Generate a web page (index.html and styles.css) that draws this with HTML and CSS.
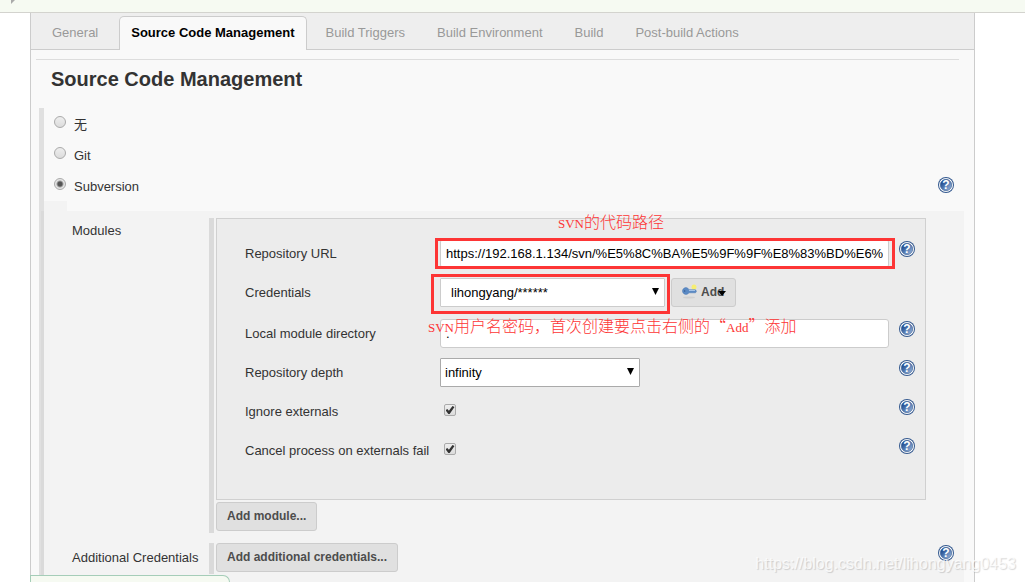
FILE: index.html
```html
<!DOCTYPE html>
<html lang="en">
<head>
<meta charset="utf-8">
<title>Source Code Management</title>
<link rel="stylesheet" href="styles.css">
</head>
<body>
<svg class="defs" aria-hidden="true">
  <defs>
    <linearGradient id="blue" x1="0" y1="0" x2="1" y2="1">
      <stop offset="0.2" stop-color="#1f4d92"/>
      <stop offset="1" stop-color="#a5c0e2"/>
    </linearGradient>
    <symbol id="help" viewBox="0 0 16 16">
      <circle cx="8" cy="8" r="8" fill="#34598f"/>
      <circle cx="8" cy="8" r="7" fill="#fff"/>
      <circle cx="8" cy="8" r="5.700" fill="url(#blue)" stroke="#34598f" stroke-width=".6"/>
      <text x="8" y="12" text-anchor="middle" font-family="Liberation Sans, sans-serif" font-weight="bold" font-size="12" fill="#fff">?</text>
    </symbol>
  </defs>
</svg>

<div class="topbar"><span class="corner"></span></div>

<main class="panel">
  <nav class="tabs">
    <a class="tab" href="#general">General</a>
    <a class="tab active" href="#scm">Source Code Management</a>
    <a class="tab" href="#triggers">Build Triggers</a>
    <a class="tab" href="#environment">Build Environment</a>
    <a class="tab" href="#build">Build</a>
    <a class="tab" href="#post">Post-build Actions</a>
  </nav>

  <h1 class="title" id="scm">Source Code Management</h1>

  <form class="scm">
    <div class="choice"><input class="radio" type="radio" name="scm" id="none"><label for="none" lang="zh-CN">无</label></div>
    <div class="choice"><input class="radio" type="radio" name="scm" id="git"><label for="git">Git</label></div>
    <div class="choice"><input class="radio" type="radio" name="scm" id="svn" checked><label for="svn">Subversion</label>
      <a class="help" href="#help" aria-label="Help for Subversion"><svg><use href="#help"/></svg></a></div>

    <div class="nub"></div>
    <div class="sub">
      <div class="setting">
        <div class="setting-name">Modules</div>
        <div class="setting-body">
          <div class="module">
            <div class="row">
              <label for="url">Repository URL</label>
              <div class="control">
                <input class="text" id="url" type="text" value="https://192.168.1.134/svn/%E5%8C%BA%E5%9F%9F%E8%83%BD%E6%">
                <span class="mark mark-url"></span>
                <span class="note note-url" lang="zh-CN"><span class="latin">SVN</span>的代码路径</span>
              </div>
              <a class="help" href="#help" aria-label="Help for Repository URL"><svg><use href="#help"/></svg></a>
            </div>
            <div class="row row-credentials">
              <label for="cred">Credentials</label>
              <div class="control">
                <span class="picker picker-cred">
                  <select class="select" id="cred"><option>lihongyang/******</option></select>
                  <svg class="caret" viewBox="0 0 7 7"><path d="M0 0h7L3.500 7z"/></svg>
                  <span class="mark mark-cred"></span>
                </span>
                <button class="button add" type="button">
                  <svg class="key" viewBox="0 0 15 15">
                    <ellipse cx="7" cy="13.500" rx="6" ry="1" fill="#d0d0d0"/>
                    <circle cx="12" cy="3" r="2.500" fill="#f6ee72"/>
                    <path d="M4 3.500a3.500 3.500 0 1 0 3 5.300h6.500l1-1.500-1-1.500H7A3.500 3.500 0 0 0 4 3.500z" fill="#5b8ac4" stroke="#4a78b4" stroke-width=".5"/>
                    <path d="M7 6.500h6" stroke="#a6c3e6"/>
                    <circle cx="2.700" cy="7" r=".7" fill="#31568a"/>
                  </svg>
                  Add
                  <svg class="add-caret" viewBox="0 0 8 6"><path d="M0 1h8L4 6z"/></svg>
                </button>
                <span class="note note-cred" lang="zh-CN"><span class="latin">SVN</span>用户名密码，首次创建要点击右侧的“<span class="latin">Add</span>”添加</span>
              </div>
            </div>
            <div class="row">
              <label for="dir">Local module directory</label>
              <div class="control"><input class="text" id="dir" type="text" value="."></div>
              <a class="help" href="#help" aria-label="Help for Local module directory"><svg><use href="#help"/></svg></a>
            </div>
            <div class="row">
              <label for="depth">Repository depth</label>
              <div class="control">
                <span class="picker picker-depth">
                  <select class="select" id="depth"><option>infinity</option></select>
                  <svg class="caret" viewBox="0 0 7 7"><path d="M0 0h7L3.500 7z"/></svg>
                </span>
              </div>
              <a class="help" href="#help" aria-label="Help for Repository depth"><svg><use href="#help"/></svg></a>
            </div>
            <div class="row">
              <label for="ignore">Ignore externals</label>
              <div class="control"><input class="check" id="ignore" type="checkbox" checked></div>
              <a class="help" href="#help" aria-label="Help for Ignore externals"><svg><use href="#help"/></svg></a>
            </div>
            <div class="row">
              <label for="cancel">Cancel process on externals fail</label>
              <div class="control"><input class="check" id="cancel" type="checkbox" checked></div>
              <a class="help" href="#help" aria-label="Help for Cancel process on externals fail"><svg><use href="#help"/></svg></a>
            </div>
          </div>
          <button class="button" type="button">Add module...</button>
        </div>
      </div>
      <div class="setting">
        <div class="setting-name setting-name-inline">Additional Credentials</div>
        <div class="setting-body"><button class="button" type="button">Add additional credentials...</button></div>
        <a class="help" href="#help" aria-label="Help for Additional Credentials"><svg><use href="#help"/></svg></a>
      </div>
    </div>
  </form>
</main>

<div class="bubble"></div>
<div class="watermark">https://blog.csdn.net/lihongyang0453</div>
</body>
</html>
```

FILE: styles.css
```css
* { box-sizing: border-box; }

body {
  margin: 0;
  min-height: 100vh;
  position: relative;
  display: flex;
  flex-direction: column;
  background: #fff;
  color: #333;
  font: 13px/16px "Liberation Sans", "Noto Sans CJK SC", sans-serif;
}

.defs { position: absolute; width: 0; height: 0; }

.topbar {
  flex: none;
  height: 13px;
  padding-left: 11px;
  background: #f6faf2;
  border-bottom: 1px solid #d3d3ce;
}
.corner {
  display: block;
  width: 0;
  border-top: 4px solid #aaa;
  border-right: 4px solid transparent;
}

.panel {
  flex: 1;
  display: flex;
  flex-direction: column;
  margin: 0 50px 0 30px;
  background: #f9f9f9;
  border: solid #ccc;
  border-width: 0 1px;
}

.tabs {
  display: flex;
  align-items: flex-end;
  height: 37px;
  padding-left: 5px;
  background: #eee;
  border-bottom: 1px solid #ccc;
}
.tab {
  height: 33px;
  padding: 9px 16px 0;
  color: #999;
  text-decoration: none;
  white-space: nowrap;
}
.tab.active {
  height: 34px;
  margin: 0 3px -1px 5px;
  padding: 8px 11px 0;
  color: #000;
  font-weight: bold;
  background: #f9f9f9;
  border: 1px solid #ccc;
  border-bottom: 0;
  border-radius: 5px 5px 0 0;
}

.title {
  margin: 9px 15px 17px 5px;
  padding: 7px 15px 0;
  border-top: 1px solid #ddd;
  font-size: 20px;
  line-height: 24px;
}

.scm {
  flex: 1;
  display: flex;
  flex-direction: column;
  margin: 0 10px 0 8px;
  border-left: 5px solid #e0e0e0;
}

.choice {
  display: flex;
  align-items: center;
  height: 31px;
  padding: 0 10px 2px;
}
.choice label { padding-top: 4px; }
.choice .help { align-self: center; margin: 0 0 0 auto; }

.radio, .check {
  appearance: none;
  flex: none;
  width: 12px;
  height: 12px;
  background: linear-gradient(#eee, #dcdcdc);
  border: 1px solid #aaa;
}
.radio { margin: 0 8px 2px 0; border-radius: 50%; }
.radio:checked { background: radial-gradient(#555 0 2px, #e6e6e6 4px); }
.check {
  margin: 0 0 3px 4px;
  border-radius: 2px;
  display: grid;
  place-items: center;
}
.check::after {
  content: "";
  width: 9px;
  height: 8px;
  background: #333;
  clip-path: polygon(0 52%, 20% 36%, 38% 58%, 78% 0, 100% 14%, 46% 100%, 32% 100%);
}

.nub { width: 23px; height: 10px; background: #f3f3f3; }

.sub {
  flex: 1;
  display: flex;
  flex-direction: column;
  gap: 10px;
  margin-left: -3px;
  padding: 7px 10px 8px 28px;
  background: #f3f3f3;
  border-left: 3px solid #dadada;
}
.setting {
  display: grid;
  grid-template-columns: 137px 1fr 16px;
}
.setting-name { padding-top: 5px; white-space: nowrap; }
.setting-name-inline { padding-top: 7px; }
.setting-body {
  display: flex;
  flex-direction: column;
  align-items: flex-start;
  gap: 2px;
  margin-right: 12px;
  padding: 0 0 2px 2px;
  border-left: 5px solid #dadada;
}

.module {
  align-self: stretch;
  display: flex;
  flex-direction: column;
  gap: 10px;
  padding: 20px 10px 34px 28px;
  background: #ececec;
  border: 1px solid #d0d0d0;
}
.row {
  display: grid;
  grid-template-columns: 185px 1fr 16px;
  column-gap: 10px;
  align-items: center;
  height: 29px;
}
.row-credentials { margin-bottom: 2px; }
.row label { white-space: nowrap; }

.control {
  position: relative;
  display: flex;
  align-items: center;
  height: 29px;
}

.text, .select {
  width: 100%;
  height: 29px;
  padding: 0 5px;
  background: #fff;
  border: 1px solid #ccc;
  border-radius: 3px;
  color: #000;
  font: 13px "Liberation Sans", sans-serif;
}
.select { appearance: none; padding: 0 4px; border-color: #aaa; border-radius: 1px; }

.picker { position: relative; height: 29px; }
.picker-cred { width: 225px; margin-right: 6px; }
.picker-depth { width: 200px; }
.picker-cred .select { padding-left: 10px; border-color: #ccc; }
.caret { position: absolute; top: 10px; right: 6px; width: 7px; height: 7px; }

.help {
  align-self: start;
  width: 16px;
  height: 16px;
  margin-top: 2px;
}
.help svg { display: block; width: 16px; height: 16px; }

.button {
  height: 29px;
  padding: 0 10px 2px;
  background: #e0e0e0;
  border: 1px solid #ccc;
  border-radius: 3px;
  color: #4d4d4d;
  font: bold 12px "Liberation Sans", sans-serif;
  white-space: nowrap;
}
.add {
  position: relative;
  display: flex;
  align-items: center;
  gap: 4px;
  width: 65px;
}
.key { flex: none; width: 15px; height: 15px; }
.add-caret { position: absolute; right: 9px; top: 11px; width: 8px; height: 6px; }

.mark {
  position: absolute;
  border: 3px solid #fd3535;
  pointer-events: none;
}
.mark-url { inset: -1px -6px -1px -5px; }
.mark-cred { inset: -4px -5px -7px -9px; }

.note {
  position: absolute;
  z-index: 1;
  color: #fd3535;
  font: 300 16px/20px "Noto Sans CJK SC", sans-serif;
  white-space: nowrap;
  pointer-events: none;
}
.note .latin { font: 13px "Liberation Serif", serif; }
.note-url { left: 118px; top: -28px; }
.note-cred { left: -12px; top: 37px; }

.bubble {
  position: absolute;
  left: 30px;
  bottom: 0;
  width: 200px;
  height: 7px;
  background: #f6faf2;
  border: 1px solid #a5cdb8;
  border-bottom: 0;
  border-radius: 0 7px 0 0;
}
.watermark {
  position: absolute;
  right: 9px;
  bottom: 8px;
  color: rgba(255, 255, 255, .75);
  font-size: 16px;
  line-height: 20px;
  text-shadow: 1px 1px 1px rgba(0, 0, 0, .16);
}
```
